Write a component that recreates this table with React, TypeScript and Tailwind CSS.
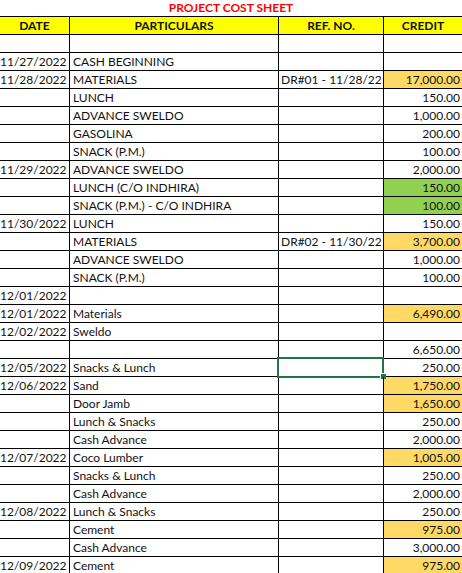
import React from 'react';

type Row = {
  date?: string;
  item?: string;
  ref?: string;
  credit?: string;
  fill?: 'gold' | 'green';
  selected?: boolean;
};

const rows: Row[] = [
  {},
  { date: '11/27/2022', item: 'CASH BEGINNING' },
  { date: '11/28/2022', item: 'MATERIALS', ref: 'DR#01 - 11/28/22', credit: '17,000.00', fill: 'gold' },
  { item: 'LUNCH', credit: '150.00' },
  { item: 'ADVANCE SWELDO', credit: '1,000.00' },
  { item: 'GASOLINA', credit: '200.00' },
  { item: 'SNACK (P.M.)', credit: '100.00' },
  { date: '11/29/2022', item: 'ADVANCE SWELDO', credit: '2,000.00' },
  { item: 'LUNCH (C/O INDHIRA)', credit: '150.00', fill: 'green' },
  { item: 'SNACK (P.M.) - C/O INDHIRA', credit: '100.00', fill: 'green' },
  { date: '11/30/2022', item: 'LUNCH', credit: '150.00' },
  { item: 'MATERIALS', ref: 'DR#02 - 11/30/22', credit: '3,700.00', fill: 'gold' },
  { item: 'ADVANCE SWELDO', credit: '1,000.00' },
  { item: 'SNACK (P.M.)', credit: '100.00' },
  { date: '12/01/2022' },
  { date: '12/01/2022', item: 'Materials', credit: '6,490.00', fill: 'gold' },
  { date: '12/02/2022', item: 'Sweldo' },
  { credit: '6,650.00' },
  { date: '12/05/2022', item: 'Snacks & Lunch', credit: '250.00', selected: true },
  { date: '12/06/2022', item: 'Sand', credit: '1,750.00', fill: 'gold' },
  { item: 'Door Jamb', credit: '1,650.00', fill: 'gold' },
  { item: 'Lunch & Snacks', credit: '250.00' },
  { item: 'Cash Advance', credit: '2,000.00' },
  { date: '12/07/2022', item: 'Coco Lumber', credit: '1,005.00', fill: 'gold' },
  { item: 'Snacks & Lunch', credit: '250.00' },
  { item: 'Cash Advance', credit: '2,000.00' },
  { date: '12/08/2022', item: 'Lunch & Snacks', credit: '250.00' },
  { item: 'Cement', credit: '975.00', fill: 'gold' },
  { item: 'Cash Advance', credit: '3,000.00' },
  { date: '12/09/2022', item: 'Cement', credit: '975.00', fill: 'gold' },
];

const fillClass = (fill?: Row['fill']) =>
  fill === 'gold' ? 'bg-[#ffd966]' : fill === 'green' ? 'bg-[#92d050]' : 'bg-white';

const App: React.FC = () => {
  return (
    <div className="w-[462px] h-[573px] overflow-hidden bg-white text-[#111] text-[12px] leading-[17px] font-['Lato',sans-serif]">
      <div className="h-[16px] text-center font-bold text-[12px] leading-[16px] text-[#ff0000]">
        PROJECT COST SHEET
      </div>

      <div className="grid grid-cols-[70px_209px_105px_1fr] h-[18px] border-t border-black bg-[#ffff00] font-bold text-center">
        <div className="border-r border-black">DATE</div>
        <div className="border-r border-black">PARTICULARS</div>
        <div className="border-r border-black">REF. NO.</div>
        <div>CREDIT</div>
      </div>

      {rows.map((r, i) => (
        <div key={i} className="grid grid-cols-[70px_209px_105px_1fr] h-[18px] border-t border-black">
          <div className="border-r border-black text-right pr-[3px] whitespace-nowrap">{r.date}</div>
          <div className="border-r border-black pl-[3px] whitespace-nowrap">{r.item}</div>
          <div className="relative border-r border-black pl-[2px] whitespace-nowrap">
            {r.ref}
            {r.selected && (
              <>
                <div className="absolute -left-[2px] -top-[2px] w-[107px] h-[21px] border-2 border-[#217346]" />
                <div className="absolute left-[101px] top-[14px] w-[6px] h-[6px] bg-[#217346] border-l border-t border-white" />
              </>
            )}
          </div>
          <div className={`${fillClass(r.fill)} text-right pr-[2px] whitespace-nowrap`}>{r.credit}</div>
        </div>
      ))}
    </div>
  );
};

export default App;
